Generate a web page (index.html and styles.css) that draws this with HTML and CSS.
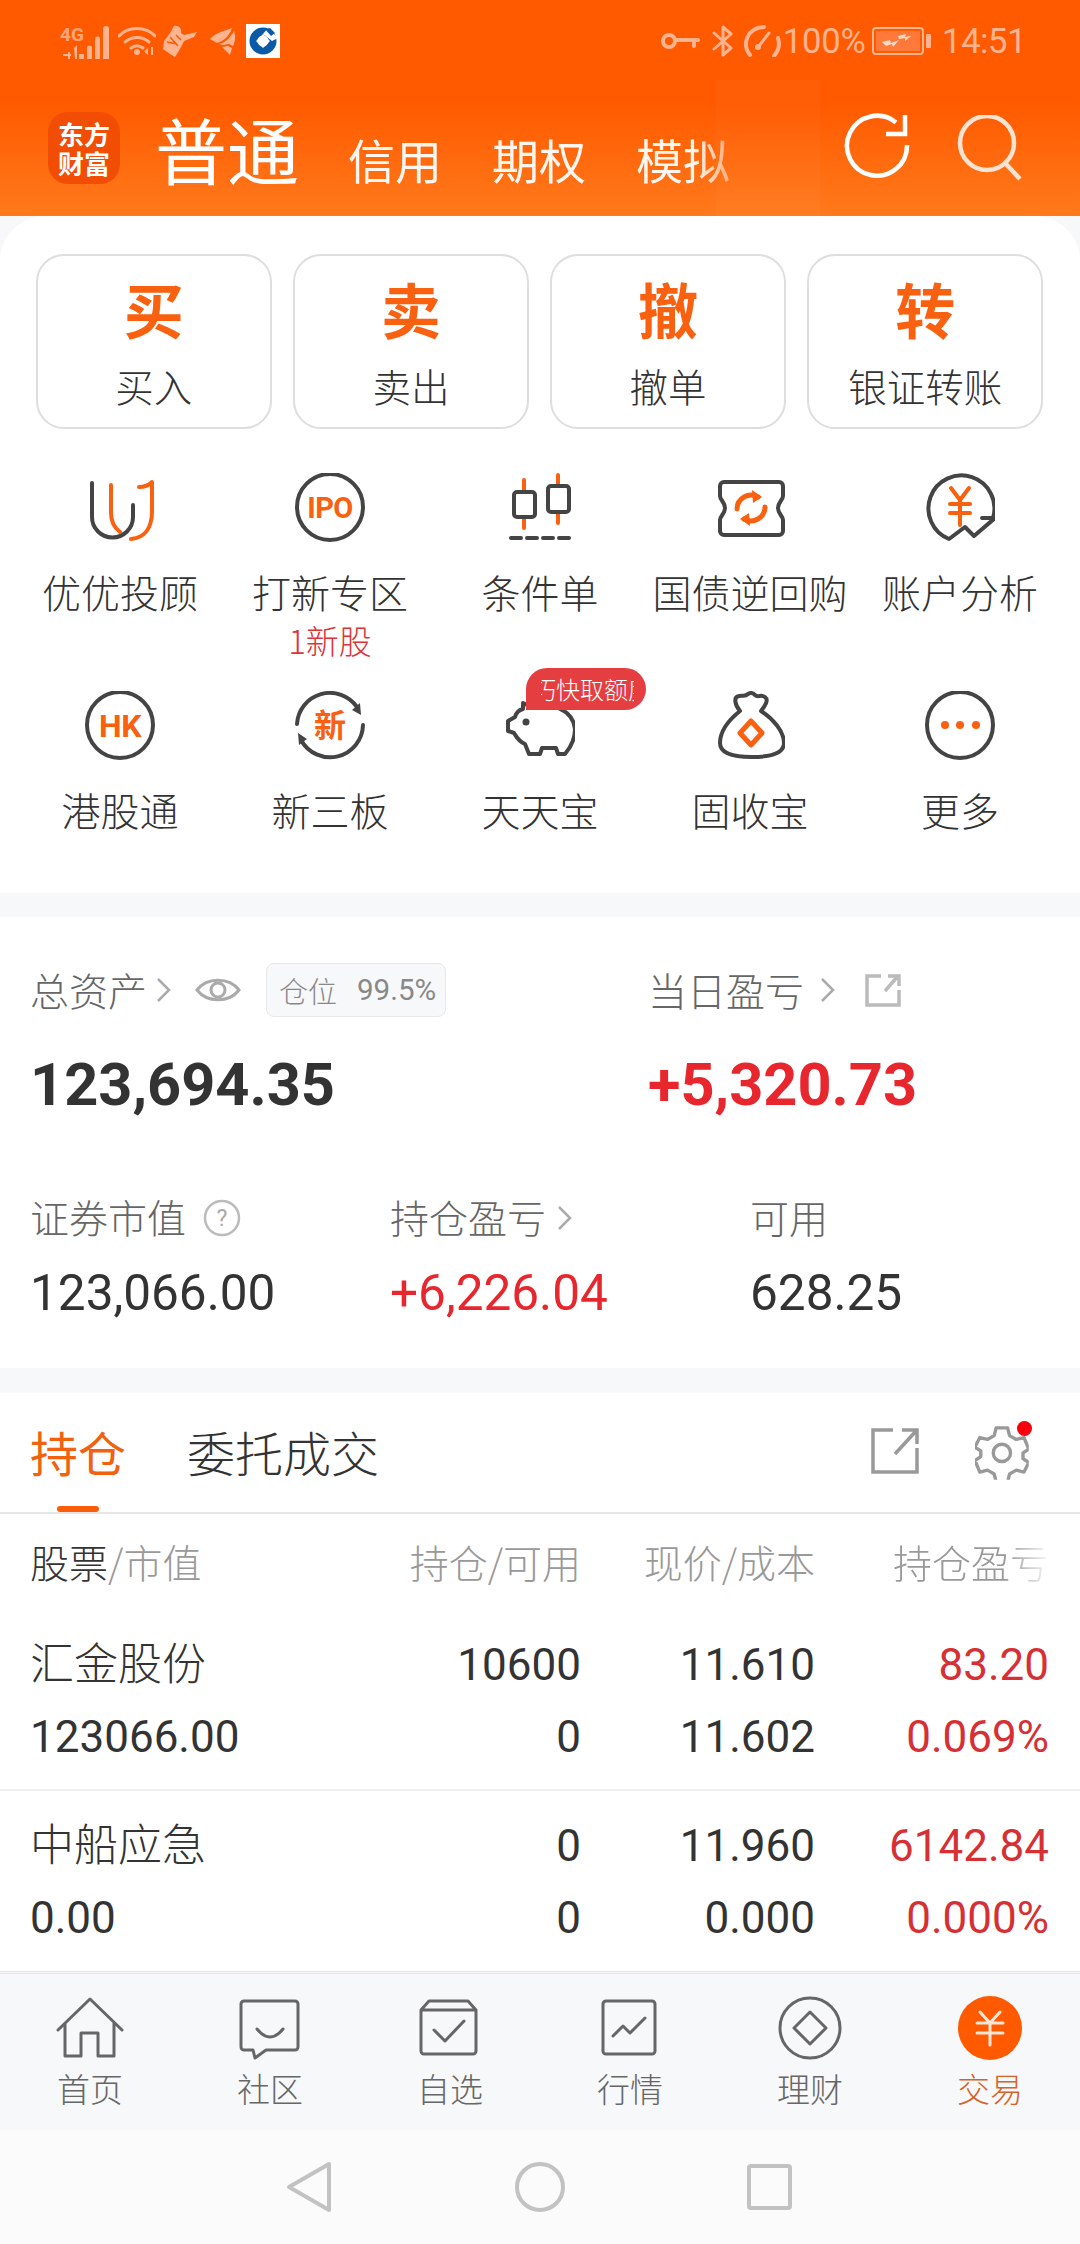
FILE: index.html
```html
<!DOCTYPE html>
<html lang="zh-CN">
<head>
<meta charset="utf-8">
<title>交易</title>
<link rel="stylesheet" href="styles.css">
</head>
<body>
<div class="page">
  <header class="header">
    <div class="statusbar">
      <div class="status-left">
        <svg class="st-signal" width="52" height="38" viewBox="0 -4 52 38"><text x="0" y="15" class="st-4g">4G</text><path class="st-fill" d="M3 28h5v-2h2v2h1v2h-1v3H8v-3H3zM14 22l3-3v14h-2zM19 33v-5h5v5zM27 33V22a2 2 0 0 1 5 0v11zM35 33V13a2 2 0 0 1 5 0v20zM43 33V3a2.500 2.500 0 0 1 6 0v30z"/></svg>
        <svg class="st-wifi" width="38" height="30" viewBox="0 0 38 30"><g class="st-line"><path d="M1 10C10 0 28 0 37 10"/><path d="M7 16c7-6 17-6 24 0"/><path d="M13 22c4-3 8-3 12 0"/></g><circle class="st-fill" cx="19" cy="26" r="3"/><path class="st-fill" d="M30 22v7l-4-3.500zM33 21h2v8h-2z"/></svg>
        <svg class="st-bird" width="36" height="32" viewBox="0 0 36 32"><path class="st-fill" d="M12 1c5-1 8 3 7 7l3 2 13-3-3 5-10 4-4 8-5 8-5-3-7-5 1-8 3-4 3-4z"/><path class="st-cut" d="M5 17l10 2M8 12l8 9M14 10l5 5"/></svg>
        <svg class="st-wing" width="28" height="30" viewBox="0 0 28 30"><path class="st-fill" d="M1 13C7 6 16 5 23 2 21 9 15 15 8 17zM10 18C16 17 21 12 25 5 27 11 26 16 24 20L20 18 14 19zM13 21L19 20 23 22 21 29z"/></svg>
        <div class="ccb"><svg width="34" height="34" viewBox="0 0 34 34"><circle cx="17" cy="17" r="9.500" class="ccb-ring"/><path class="ccb-cut" d="M17 10l7 7-7 7-7-7zM22 4l10 10-6 3-9-7z"/><path class="ccb-tip" d="M19 5l5-1 5 5-4 3z"/></svg></div>
      </div>
      <div class="status-right">
        <svg class="st-key" width="40" height="20" viewBox="0 0 40 20"><circle cx="9" cy="10" r="6" class="st-line st-thick"/><path class="st-line st-thick" d="M15 9h23M34 9v6"/></svg>
        <svg class="st-bt" width="22" height="32" viewBox="0 0 22 32"><path class="st-line" d="M2 8l17 15-8 7V2l8 7L2 24"/></svg>
        <svg class="st-gauge" width="38" height="32" viewBox="0 0 38 32"><path class="st-line st-thick" d="M7 30C-1 20 3 3 21 2M35 13c2 6 1 12-4 18"/><path class="st-line" d="M16 21l10-13"/><circle class="st-fill" cx="15" cy="22" r="3"/></svg>
        <span class="st-text st-pct">100%</span>
        <div class="battery"><svg width="60" height="28" viewBox="0 0 60 28"><rect x="1" y="1" width="50" height="26" rx="3" class="bat-box"/><rect x="4" y="4" width="44" height="20" rx="1" class="bat-in"/><path class="bat-bolt" d="M10 15l8-2 1 3 8-3-6 7-1-3-6 2zM26 9l8-2-1 3 6-1-6 5 0-3-6 1z"/><rect x="54" y="7" width="5" height="14" rx="1" class="st-fill"/></svg></div>
        <span class="st-text st-time">14:51</span>
      </div>
    </div>
    <div class="topbar">
      <div class="logo"><span>东方</span><span>财富</span></div>
      <nav class="modes">
        <span class="mode mode-main">普通</span>
        <span class="mode">信用</span>
        <span class="mode">期权</span>
        <span class="mode mode-fade">模拟</span>
      </nav>
      <div class="top-actions">
        <svg class="ic-refresh" width="66" height="66" viewBox="0 0 66 66"><path d="M63 33a30 30 0 1 1-11-22.500M61 3v19H42"/></svg>
        <svg class="ic-search" width="66" height="66" viewBox="0 0 66 66"><circle cx="30" cy="28" r="27"/><path d="M48 48l15 16"/></svg>
      </div>
    </div>
  </header>

  <section class="card-main">
    <div class="actions">
      <div class="action"><span class="action-big">买</span><span class="action-label">买入</span></div>
      <div class="action"><span class="action-big">卖</span><span class="action-label">卖出</span></div>
      <div class="action"><span class="action-big">撤</span><span class="action-label">撤单</span></div>
      <div class="action"><span class="action-big">转</span><span class="action-label">银证转账</span></div>
    </div>
    <div class="grid">
      <div class="cell">
        <svg class="icon" width="70" height="70" viewBox="0 0 70 70"><path class="dk" d="M7 10V44a20.500 20.500 0 0 0 41 0V32"/><path class="or" d="M26 12V40q0 12 9 19M54 14q8 0 13-5V38c0 18-8 27-21 28"/></svg>
        <span class="cell-label">优优投顾</span>
      </div>
      <div class="cell">
        <svg class="icon" width="70" height="70" viewBox="0 0 70 70"><circle class="dk" cx="35" cy="34" r="33"/><text x="35" y="45" class="ic-text ic-ipo">IPO</text></svg>
        <span class="cell-label">打新专区</span>
        <span class="cell-sub">1新股</span>
      </div>
      <div class="cell">
        <svg class="icon" width="70" height="70" viewBox="0 0 70 70"><path class="or" d="M19 7V55M53 2V50"/><rect class="dk dk-fill" x="9" y="19" width="21" height="25" rx="3"/><rect class="dk dk-fill" x="43" y="13" width="21" height="26" rx="3"/><path class="dk" d="M6 65H67" stroke-dasharray="10 6"/></svg>
        <span class="cell-label">条件单</span>
      </div>
      <div class="cell">
        <svg class="icon" width="70" height="70" viewBox="0 0 70 70"><path class="dk" d="M9 9H64a4 4 0 0 1 4 4V23c0 4-5 6-5 12s5 8 5 12V58a4 4 0 0 1-4 4H9a4 4 0 0 1-4-4V47c0-4 5-6 5-12s-5-8-5-12V13a4 4 0 0 1 4-4z"/><path class="or or-heavy" d="M22 36a14 14 0 0 1 21-12M50 34a14 14 0 0 1-21 12"/><path class="or-fill" d="M37 17l10 7-9 6zM35 53l-10-7 9-6z"/></svg>
        <span class="cell-label">国债逆回购</span>
      </div>
      <div class="cell">
        <svg class="icon" width="70" height="70" viewBox="0 0 70 70"><path class="dk" d="M68 45A33 33 0 1 0 24 66L40 54l9 9L70 45H57"/><path class="or" d="M26 15l9 12 9-12M25 31H45M25 40H45M35 27V52"/></svg>
        <span class="cell-label">账户分析</span>
      </div>
      <div class="cell">
        <svg class="icon" width="70" height="70" viewBox="0 0 70 70"><circle class="dk" cx="35" cy="34" r="33"/><text x="35" y="46" class="ic-text ic-hk">HK</text></svg>
        <span class="cell-label">港股通</span>
      </div>
      <div class="cell">
        <svg class="icon" width="70" height="70" viewBox="0 0 70 70"><path class="dk" d="M2 33A33 33 0 0 1 62 16M68 34A33 33 0 0 1 6 49"/><path class="dk-solid" d="M66 24L57 19l8-7zM3 42l9 6-8 6z"/><text x="35" y="46" class="ic-text ic-xin">新</text></svg>
        <span class="cell-label">新三板</span>
      </div>
      <div class="cell">
        <div class="icon-wrap">
          <svg class="icon" width="70" height="70" viewBox="0 0 70 70"><path class="dk" d="M18 12l10 5C44 10 68 18 70 38c0 9-4 18-10 25H53l-2-6H37l-2 6H24l-4-10C13 50 11 45 9 42L3 40V30l7-4c1-4 4-7 8-8z"/><circle class="dk-solid" cx="21" cy="31" r="3.500"/></svg>
          <div class="badge"><span class="badge-clip"><span class="badge-text">巧快取额度</span></span></div>
        </div>
        <span class="cell-label">天天宝</span>
      </div>
      <div class="cell">
        <svg class="icon" width="70" height="70" viewBox="0 0 70 70"><path class="dk" d="M25 20C20 14 18 6 24 5 28 4 30 6 33 3 36 1 38 2 40 4 43 7 46 3 50 6 54 9 50 15 46 20 58 28 69 40 69 52 69 62 58 66 37 66 16 66 5 62 5 52 5 40 15 28 25 20Z"/><path class="or or-heavy" d="M36 30L47 42 36 54 25 42Z"/></svg>
        <span class="cell-label">固收宝</span>
      </div>
      <div class="cell">
        <svg class="icon" width="70" height="70" viewBox="0 0 70 70"><circle class="dk" cx="35" cy="34" r="33"/><circle class="or-fill" cx="20" cy="34" r="4"/><circle class="or-fill" cx="35" cy="34" r="4"/><circle class="or-fill" cx="51" cy="34" r="4"/></svg>
        <span class="cell-label">更多</span>
      </div>
    </div>
  </section>

  <section class="assets">
    <div class="assets-top">
      <div class="a-col-left">
        <div class="a-head">
          <span class="a-label">总资产</span>
          <svg class="chev" width="18" height="28" viewBox="0 0 18 28"><path d="M3 3l11 11L3 25"/></svg>
          <svg class="eye" width="46" height="30" viewBox="0 0 46 30"><path d="M2 15C12 2 34 2 44 15 34 28 12 28 2 15z"/><circle cx="23" cy="15" r="7"/></svg>
          <div class="pill"><span class="pill-k">仓位</span><span class="pill-v">99.5%</span></div>
        </div>
        <div class="a-big">123,694.35</div>
      </div>
      <div class="a-col-right">
        <div class="a-head">
          <span class="a-label">当日盈亏</span>
          <svg class="chev chev-day" width="18" height="28" viewBox="0 0 18 28"><path d="M3 3l11 11L3 25"/></svg>
          <svg class="share share-sm" width="36" height="34" viewBox="0 0 36 34"><path d="M16 3H2V32H34V17M20 18L33 3M23 3H34V13"/></svg>
        </div>
        <div class="a-big a-red">+5,320.73</div>
      </div>
    </div>
    <div class="assets-bottom">
      <div class="ab-col">
        <div class="ab-head"><span class="a-label">证券市值</span><svg class="help" width="38" height="38" viewBox="0 0 38 38"><circle cx="19" cy="19" r="17"/><text x="19" y="27" class="help-q">?</text></svg></div>
        <div class="ab-val">123,066.00</div>
      </div>
      <div class="ab-col">
        <div class="ab-head"><span class="a-label">持仓盈亏</span><svg class="chev chev-hold" width="18" height="28" viewBox="0 0 18 28"><path d="M3 3l11 11L3 25"/></svg></div>
        <div class="ab-val a-red">+6,226.04</div>
      </div>
      <div class="ab-col">
        <div class="ab-head"><span class="a-label">可用</span></div>
        <div class="ab-val">628.25</div>
      </div>
    </div>
  </section>

  <section class="holdings">
    <div class="tabs">
      <span class="tab tab-on">持仓</span>
      <span class="tab">委托成交</span>
      <div class="tab-tools">
        <svg class="share" width="48" height="46" viewBox="0 0 48 46"><path d="M22 2H2V44H46V20M24 26L45 3M31 2H46V16"/></svg>
        <div class="gear-wrap">
          <svg class="gear" width="56" height="56" viewBox="0 0 56 56"><path d="M22 4h12l2 8 7 4 8-2 5 12-6 4v6l6 4-5 10-8-2-7 4-2 8H22l-2-8-7-4-8 2L0 38l6-4v-6L0 24l5-10 8 2 7-4z" transform="translate(0 -2)"/><circle cx="28" cy="28" r="9"/></svg>
          <i class="gear-dot"></i>
        </div>
      </div>
    </div>
    <div class="thead">
      <span class="th-first"><b>股票</b>/市值</span>
      <span class="r">持仓/可用</span>
      <span class="r">现价/成本</span>
      <span class="r th-fade">持仓盈亏</span>
    </div>
    <div class="trow trow-line">
      <span class="name">汇金股份</span><span class="r">10600</span><span class="r">11.610</span><span class="r red">83.20</span>
      <span>123066.00</span><span class="r">0</span><span class="r">11.602</span><span class="r red">0.069%</span>
    </div>
    <div class="trow trow-last">
      <span class="name">中船应急</span><span class="r">0</span><span class="r">11.960</span><span class="r red">6142.84</span>
      <span>0.00</span><span class="r">0</span><span class="r">0.000</span><span class="r red">0.000%</span>
    </div>
  </section>

  <nav class="tabbar">
    <div class="tb-item">
      <svg class="tb-ic" width="70" height="70" viewBox="0 0 70 70"><path d="M3 36L35 5l32 31M10 29V62H26V39H43V62H59V29"/></svg>
      <span>首页</span>
    </div>
    <div class="tb-item">
      <svg class="tb-ic" width="70" height="70" viewBox="0 0 70 70"><path d="M9 7H60a3 3 0 0 1 3 3V53a3 3 0 0 1-3 3H31L20 64 18 56H9a3 3 0 0 1-3-3V10a3 3 0 0 1 3-3zM22 35q13 16 26 0"/></svg>
      <span>社区</span>
    </div>
    <div class="tb-item">
      <svg class="tb-ic" width="70" height="70" viewBox="0 0 70 70"><path d="M6 16L14 7H53L61 16V57a3 3 0 0 1-3 3H9a3 3 0 0 1-3-3zM6 16H61M19 36L30 47 49 27"/></svg>
      <span>自选</span>
    </div>
    <div class="tb-item">
      <svg class="tb-ic" width="70" height="70" viewBox="0 0 70 70"><rect x="8" y="7" width="52" height="53" rx="3"/><path d="M18 42L28 32l7 7L50 24"/></svg>
      <span>行情</span>
    </div>
    <div class="tb-item">
      <svg class="tb-ic" width="70" height="70" viewBox="0 0 70 70"><circle cx="35" cy="34" r="30"/><path d="M35 18L51 34 35 50 19 34Z" stroke-linejoin="round"/></svg>
      <span>理财</span>
    </div>
    <div class="tb-item tb-on">
      <svg class="tb-ic" width="70" height="70" viewBox="0 0 70 70"><circle class="tb-disc" cx="35" cy="34" r="32"/><path class="tb-yen" d="M25 18l10 11 10-11M22 29H48M22 39H48M35 29V51"/></svg>
      <span>交易</span>
    </div>
  </nav>

  <div class="sysnav">
    <svg width="50" height="54" viewBox="0 0 50 54"><path d="M44 4V50L4 27Z"/></svg>
    <svg width="50" height="54" viewBox="0 0 50 54"><circle cx="25" cy="27" r="23"/></svg>
    <svg width="50" height="54" viewBox="0 0 50 54"><rect x="4" y="6" width="41" height="42" rx="2"/></svg>
  </div>
</div>
</body>
</html>
```
FILE: styles.css
```css
* { box-sizing: border-box; }
html, body { margin: 0; padding: 0; }
body { background: #f7f8fa; font-family: Roboto, "Noto Sans CJK SC", sans-serif; color: #333; }
.page { width: 1080px; height: 2244px; overflow: hidden; display: flex; flex-direction: column; background: #f7f8fa; }
svg { display: block; fill: none; }

/* header */
.header { height: 216px; flex: none; background: linear-gradient(#ff5a00 48%, #ff7a1c 100%); position: relative; }
.header::after { content: ""; position: absolute; left: 716px; top: 80px; width: 104px; height: 136px; background: rgba(255, 255, 255, .025); }
.statusbar { height: 82px; display: flex; justify-content: space-between; align-items: center; padding: 0 54px 0 60px; }
.status-left, .status-right { display: flex; align-items: center; }
.st-fill { fill: #ffb48f; }
.st-line { stroke: #ffb48f; stroke-width: 3; fill: none; stroke-linecap: round; stroke-linejoin: round; }
.st-thick { stroke-width: 4; }
.st-4g { font: 700 19px Roboto, sans-serif; fill: #ffa67c; }
.st-cut { stroke: #ff5a00; stroke-width: 1.500; fill: none; }
.st-wifi { margin-left: 6px; }
.st-bird { margin-left: 6px; }
.st-wing { margin-left: 11px; }
.ccb { width: 34px; height: 34px; margin-left: 9px; background: #fff; }
.ccb-ring { fill: none; stroke: #0b5aa8; stroke-width: 8; }
.ccb-cut { fill: #fff; }
.ccb-tip { fill: #0b5aa8; }
.st-text { font: 400 34.500px/1 Roboto, sans-serif; color: #ffb48f; }
.st-key { margin-right: 12px; }
.st-bt { margin-right: 9px; }
.st-gauge { margin-right: 2px; }
.st-pct { width: 89px; letter-spacing: -.2px; }
.battery { margin-right: 10px; }
.bat-box { fill: none; stroke: #ffb48f; stroke-width: 2; }
.bat-in { fill: #ff7a3a; }
.bat-bolt { fill: #ffd9c4; }
.st-time { font-size: 35px; letter-spacing: -.6px; }

.topbar { height: 134px; display: flex; align-items: flex-start; padding: 30px 57px 0 48px; position: relative; z-index: 1; }
.logo { width: 72px; height: 72px; border-radius: 20px; background: #f14d05; color: #fff; display: flex; flex-direction: column; align-items: center; justify-content: center; font: 700 26px/29px "Noto Sans CJK SC", sans-serif; }
.modes { display: flex; align-items: baseline; margin-left: 35px; height: 72px; font-family: "Noto Sans CJK SC", sans-serif; color: #fff; }
.mode { font-size: 47px; line-height: 72px; margin-left: 50px; color: #fff; opacity: .94; font-weight: 400; }
.mode-main { font-size: 72px; margin-left: 0; margin-right: -1px; opacity: 1; font-weight: 400; }
.mode-fade { -webkit-mask-image: linear-gradient(to left, rgba(0,0,0,.45) 0, #000 36px); mask-image: linear-gradient(to left, rgba(0,0,0,.45) 0, #000 36px); }
.top-actions { margin-left: auto; display: flex; align-items: flex-start; gap: 47px; }
.ic-refresh path { stroke: #fff; stroke-width: 4.500; }
.ic-search { margin-top: 3px; }
.ic-search circle, .ic-search path { stroke: #ffe3d2; stroke-width: 4.500; }

/* main card */
.card-main { height: 677px; flex: none; background: #fff; border-radius: 45px 45px 0 0; padding-top: 38px; position: relative; z-index: 2; }
.actions { display: flex; gap: 21.500px; padding: 0 37px 0 36px; }
.action { flex: 1; height: 175px; border: 2px solid #dedede; border-radius: 28px; display: flex; flex-direction: column; align-items: center; padding-top: 17px; font-family: "Noto Sans CJK SC", sans-serif; }
.action-big { font-size: 60px; line-height: 70px; font-weight: 700; color: #f9600f; }
.action-label { font-size: 38.500px; line-height: 46px; margin-top: 19px; color: #333; font-weight: 300; }
.grid { display: grid; grid-template-columns: repeat(5, 210px); grid-auto-rows: 218px; padding: 44px 0 0 15px; }
.cell { display: flex; flex-direction: column; align-items: center; font-family: "Noto Sans CJK SC", sans-serif; }
.icon-wrap { width: 70px; height: 70px; position: relative; }
.cell-label { font-size: 39px; line-height: 46px; margin-top: 25px; white-space: nowrap; color: #333; font-weight: 300; }
.cell-sub { font-size: 33px; line-height: 36px; margin-top: 8px; color: #dc3339; font-weight: 300; }
.dk { stroke: #444; stroke-width: 4; stroke-linecap: round; stroke-linejoin: round; fill: none; }
.dk-fill { fill: #fff; }
.dk-solid { fill: #444; }
.or { stroke: #f9600f; stroke-width: 4; stroke-linecap: round; stroke-linejoin: round; fill: none; }
.or-heavy { stroke-width: 5; }
.or-fill { fill: #f9600f; }
.ic-text { text-anchor: middle; fill: #f9600f; font-weight: 700; }
.ic-ipo { font: 700 29px Roboto, sans-serif; letter-spacing: -.5px; }
.ic-hk { font: 700 32px Roboto, sans-serif; letter-spacing: -.5px; }
.ic-xin { font: 700 32px "Noto Sans CJK SC", sans-serif; }
.badge { position: absolute; left: 21px; top: -23px; width: 120px; height: 42px; background: #e53e41; border-radius: 21px 21px 21px 0; padding-left: 15px; display: flex; align-items: center; }
.badge-clip { width: 93px; overflow: hidden; white-space: nowrap; display: block; height: 30px; }
.badge-text { display: block; margin-left: -9px; font: 300 24px/30px "Noto Sans CJK SC", sans-serif; color: #fff; }

/* assets */
.assets { height: 451px; margin-top: 24px; background: #fff; padding: 46px 0 0 30px; flex: none; }
.assets-top { display: flex; }
.a-col-left { width: 618px; flex: none; }
.a-head { height: 54px; display: flex; align-items: center; }
.a-label { font: 300 39px/46px "Noto Sans CJK SC", sans-serif; color: #666; white-space: nowrap; padding-bottom: 3px; }
.chev path { stroke: #aaa; stroke-width: 2.500; fill: none; }
.chev { margin-left: 8px; flex: none; }
.chev-day { margin-left: 15px; }
.chev-hold { margin-left: 10px; }
.eye { margin-left: 22px; flex: none; }
.eye path, .eye circle { stroke: #aaa; stroke-width: 3; fill: none; }
.pill { margin-left: 25px; width: 180px; height: 54px; border: 1px solid #e8e8e8; background: #f7f8fa; border-radius: 8px; display: flex; align-items: center; padding-left: 12px; color: #888; }
.pill-k { font: 300 29px "Noto Sans CJK SC", sans-serif; }
.pill-v { font: 400 29.500px Roboto, sans-serif; margin-left: 20px; white-space: nowrap; }
.share-sm { margin-left: 28px; }
.share path { stroke: #bbb; stroke-width: 3.500; fill: none; }
.share { flex: none; }
.a-big { font: 700 59.500px/70px Roboto, sans-serif; margin-top: 33px; color: #333; }
.a-red { color: #e8262d; }
.assets-bottom { display: flex; margin-top: 77px; }
.ab-col { width: 360px; flex: none; }
.ab-head { height: 46px; display: flex; align-items: center; }
.ab-head .a-label { padding-bottom: 8px; }
.ab-head .chev, .ab-head .help { margin-bottom: 5px; }
.ab-val { font: 400 49.500px/60px Roboto, sans-serif; margin-top: 20px; color: #333; }
.ab-val.a-red { color: #e8262d; }
.help { margin-left: 17px; flex: none; }
.help circle { stroke: #bbb; stroke-width: 2.500; fill: none; }
.help-q { font: 400 23px Roboto, sans-serif; fill: #aaa; text-anchor: middle; }

/* holdings */
.holdings { height: 578px; margin-top: 25px; background: #fff; flex: none; }
.tabs { height: 121px; display: flex; align-items: flex-start; border-bottom: 2px solid #e6e6e6; padding: 33px 0 0 30px; position: relative; }
.tab { font: 300 48px/50px "Noto Sans CJK SC", sans-serif; color: #333; margin-right: 61px; position: relative; white-space: nowrap; }
.tab-on { color: #f0620f; font-weight: 400; }
.tab-on::after { content: ""; position: absolute; left: 27px; top: 80px; width: 42px; height: 6px; border-radius: 3px; background: #f95d08; }
.tab-tools { margin-left: auto; display: flex; align-items: flex-start; gap: 56px; padding-right: 51px; }
.tab-tools .share { margin-top: 2px; }
.tab-tools .share path { stroke: #999; }
.gear-wrap { position: relative; width: 54px; height: 54px; }
.gear path, .gear circle { stroke: #999; stroke-width: 3.500; fill: none; stroke-linejoin: round; }
.gear { transform: scale(.96); transform-origin: top left; }
.gear-dot { position: absolute; left: 42px; top: -5px; width: 15px; height: 15px; border-radius: 50%; background: #f5000c; }
.thead, .trow { display: grid; grid-template-columns: 320px 231px 234px 234px; padding-left: 30px; }
.thead { height: 98px; align-items: center; padding-bottom: 4px; font: 300 39px/46px "Noto Sans CJK SC", sans-serif; color: #999; }
.thead b { font-weight: 300; color: #333; }
.thead .th-first { white-space: nowrap; }
.r { text-align: right; white-space: nowrap; }
.th-fade { -webkit-mask-image: linear-gradient(to left, rgba(0,0,0,.08) 0, #000 44px); mask-image: linear-gradient(to left, rgba(0,0,0,.08) 0, #000 44px); }
.trow { font: 400 44px/72px Roboto, "Noto Sans CJK SC", sans-serif; color: #333; grid-auto-rows: 72px; align-content: start; }
.trow-line { height: 179px; padding-top: 17px; border-bottom: 2px solid #eee; }
.trow-last { height: 180px; padding-top: 19px; }
.name { font-size: 44px; font-weight: 300; }
.red { color: #d63035; }

/* tab bar */
.tabbar { height: 159px; flex: none; display: grid; grid-template-columns: repeat(6, 180px); border-top: 3px double #e6e6e6; background: #f7f8fa; padding-top: 20px; }
.tb-item { display: flex; flex-direction: column; align-items: center; font: 300 33px/40px "Noto Sans CJK SC", sans-serif; color: #666; }
.tb-item span { margin-top: 4px; }
.tb-ic path, .tb-ic rect, .tb-ic circle { stroke: #666; stroke-width: 3; fill: none; stroke-linecap: round; stroke-linejoin: round; }
.tb-on { color: #d9622a; }
.tb-ic .tb-disc { fill: #ff5a00; stroke: none; }
.tb-ic .tb-yen { stroke: #ffe6d6; stroke-width: 3; }

/* system nav */
.sysnav { flex: 1; background: #fbfbfb; display: flex; justify-content: center; gap: 180px; padding-top: 30px; }
.sysnav path, .sysnav circle, .sysnav rect { stroke: #c2c2c2; stroke-width: 4; fill: none; stroke-linejoin: round; }
```
